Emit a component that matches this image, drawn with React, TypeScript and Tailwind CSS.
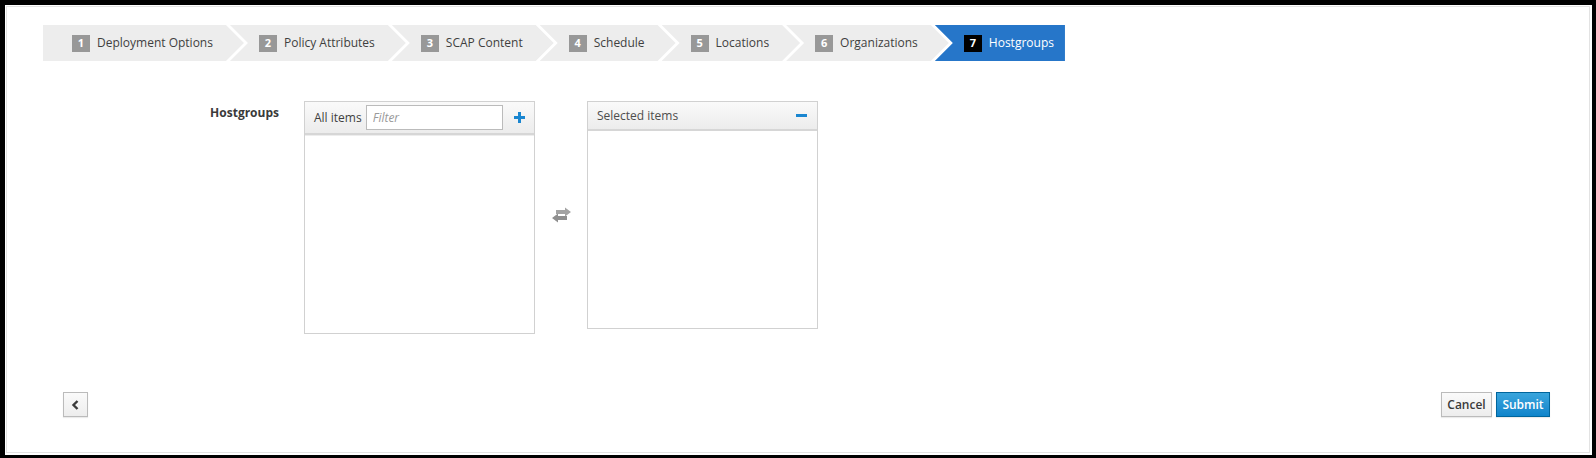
import React from 'react'

const steps = [
  'Deployment Options',
  'Policy Attributes',
  'SCAP Content',
  'Schedule',
  'Locations',
  'Organizations',
  'Hostgroups',
]

function WizardSteps({ active }: { active: number }) {
  return (
    <div className="flex h-[36px]">
      {steps.map((label, i) => {
        const isFirst = i === 0
        const isLast = i === steps.length - 1
        const isActive = i === active
        const shape = isFirst
          ? '[clip-path:polygon(0_0,calc(100%_-_18px)_0,100%_50%,calc(100%_-_18px)_100%,0_100%)] pr-[31px]'
          : isLast
            ? '[clip-path:polygon(0_0,100%_0,100%_100%,0_100%,18px_50%)] pr-[11px] ml-[-14px]'
            : '[clip-path:polygon(0_0,calc(100%_-_18px)_0,100%_50%,calc(100%_-_18px)_100%,0_100%,18px_50%)] pr-[31px] ml-[-14px]'
        return (
          <div
            key={label}
            className={`flex h-full items-center pl-[29px] ${shape} ${isActive ? 'bg-[#2676c9] text-white' : 'bg-[#ededed] text-[#3f3f3f]'}`}
          >
            <span
              className={`mr-[7px] flex h-[17px] w-[18px] items-center justify-center text-[11px] font-bold text-white ${isActive ? 'bg-black' : 'bg-[#989898]'}`}
            >
              {i + 1}
            </span>
            <span className="text-[12px] whitespace-nowrap">{label}</span>
          </div>
        )
      })}
    </div>
  )
}

function PlusIcon() {
  return (
    <svg width="11" height="11" viewBox="0 0 11 11">
      <rect x="4" y="0" width="3" height="11" fill="#1a86d0" />
      <rect x="0" y="4" width="11" height="3" fill="#1a86d0" />
    </svg>
  )
}

function MinusIcon() {
  return (
    <svg width="11" height="3" viewBox="0 0 11 3">
      <rect x="0" y="0" width="11" height="3" fill="#1a86d0" />
    </svg>
  )
}

// fa-exchange style: right arrow on top, left arrow below
function ExchangeIcon() {
  return (
    <svg width="21" height="16" viewBox="0 0 21 16">
      <path d="M5 3 L14 3 L14 0.5 L20 5 L14 9.5 L14 7 L5 7 Z" fill="#a3a3a3" />
      <path d="M16 9 L7 9 L7 6.5 L1 11 L7 15.5 L7 13 L16 13 Z" fill="#8f8f8f" />
    </svg>
  )
}

function DualList() {
  return (
    <div className="flex items-start">
      <div className="flex w-[231px] flex-col border border-[#d1d1d1]">
        <div className="flex h-[33px] items-center border-b-2 border-[#d6d6d6] bg-gradient-to-b from-[#fafafa] to-[#ececec] pl-[9px] pr-[9px]">
          <span className="text-[12px] text-[#3f3f3f]">All items</span>
          <input
            className="ml-[4px] h-[25px] w-[137px] border border-[#bbbbbb] bg-white px-[6px] text-[12px] italic outline-none placeholder:text-[#999999]"
            placeholder="Filter"
          />
          <span className="ml-auto flex">
            <PlusIcon />
          </span>
        </div>
        <div className="h-[198px] border-t border-[#ededed] bg-white" />
      </div>

      <div className="flex w-[52px] justify-center pt-[106px]">
        <ExchangeIcon />
      </div>

      <div className="flex w-[231px] flex-col border border-[#d1d1d1]">
        <div className="flex h-[29px] items-center border-b-2 border-[#d6d6d6] bg-gradient-to-b from-[#fafafa] to-[#ececec] pl-[9px] pr-[10px]">
          <span className="text-[12px] text-[#4d4d4d]">Selected items</span>
          <span className="ml-auto flex">
            <MinusIcon />
          </span>
        </div>
        <div className="h-[197px] bg-white" />
      </div>
    </div>
  )
}

export default function App() {
  return (
    <div className="h-[458px] w-[1596px] bg-black pt-[5px] pr-[4px] pb-[3px] pl-[5px] font-['Open_Sans',sans-serif]">
      <div className="h-full w-full bg-white p-px pr-[2px] pb-[2px]">
        <div className="flex h-full flex-col border border-[#e3e3e3]">
          <div className="pt-[18px] pl-[36px]">
            <WizardSteps active={6} />
          </div>

          <div className="mt-[40px] flex pl-[36px]">
            <label className="w-[236px] pt-[3px] text-right text-[12px] font-bold text-[#3a3a3a]">
              Hostgroups
            </label>
            <div className="ml-[25px]">
              <DualList />
            </div>
          </div>

          <div className="mt-auto mb-[35px] flex items-center pr-[39px] pl-[56px]">
            <button className="flex h-[25px] w-[25px] items-center justify-center border border-[#bbbbbb] bg-gradient-to-b from-[#fafafa] to-[#ededed] shadow-[0_1px_1px_rgba(0,0,0,0.08)]">
              <svg width="9" height="10" viewBox="0 0 9 10">
                <path d="M6.5 1 L2.5 5 L6.5 9" stroke="#3a3a3a" strokeWidth="2.4" fill="none" />
              </svg>
            </button>
            <div className="ml-auto flex gap-[4px]">
              <button className="h-[25px] w-[51px] border border-[#bbbbbb] bg-gradient-to-b from-[#fafafa] to-[#ededed] text-[12px] font-semibold text-[#3a3a3a] shadow-[0_1px_1px_rgba(0,0,0,0.08)]">
                Cancel
              </button>
              <button className="h-[25px] w-[54px] border border-[#00659c] bg-gradient-to-b from-[#39a5dc] to-[#0e84cb] text-[12px] font-semibold text-white shadow-[0_1px_1px_rgba(0,0,0,0.08)]">
                Submit
              </button>
            </div>
          </div>
        </div>
      </div>
    </div>
  )
}
